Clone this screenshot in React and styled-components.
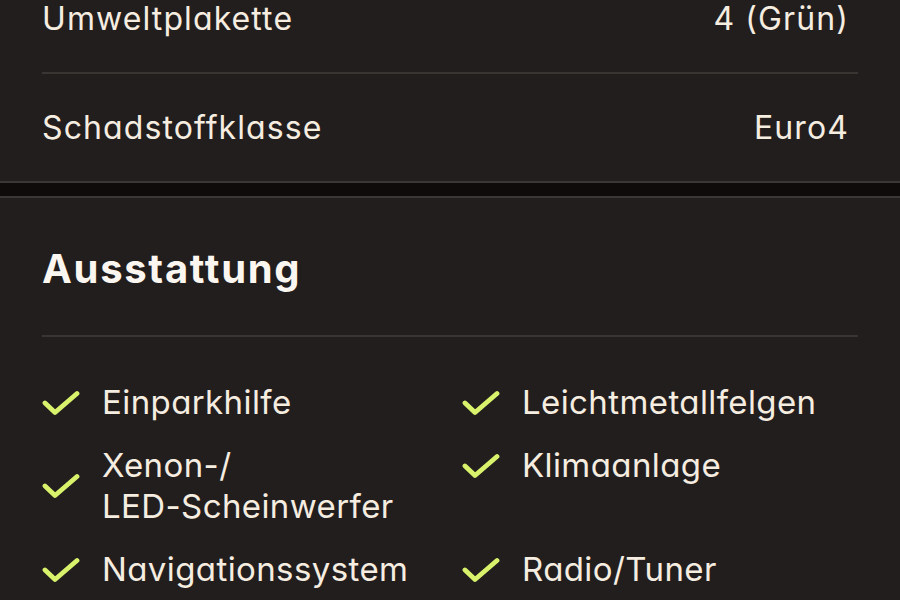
import React from "react";
import styled, { createGlobalStyle } from "styled-components";

const GlobalStyle = createGlobalStyle`
  html, body {
    margin: 0;
    padding: 0;
    background: #0e0b0a;
    overflow: hidden;
  }
  body {
    font-family: Inter, "Noto Sans", "Liberation Sans", sans-serif;
    color: #f6ede1;
  }
`;

const Page = styled.div`
  width: 900px;
  height: 600px;
  overflow: hidden;
  background: #0e0b0a;
`;

// page is scrolled a bit, the first row is cut at the top
const Scroller = styled.div`
  margin-top: -35px;
  display: flex;
  flex-direction: column;
  gap: 13px;
`;

const Card = styled.section`
  background: #221e1d;
  border-top: ${(p) => (p.$top ? "2px solid #3b3736" : "none")};
  border-bottom: 2px solid #3b3736;
  padding: 0 42px;
`;

const Row = styled.div`
  display: flex;
  align-items: center;
  justify-content: space-between;
  height: 107px;
  padding-right: 9px;
  font-size: 32px;
  letter-spacing: 1.1px;
  font-feature-settings: "cv11";
  border-bottom: ${(p) => (p.$last ? "none" : "2px solid #393533")};
`;

const Heading = styled.h2`
  margin: 0;
  padding: 47px 0 42px;
  font-size: 40px;
  line-height: 48px;
  font-weight: 700;
  letter-spacing: 1.7px;
  color: #fbf6ef;
  border-bottom: 2px solid #393533;
`;

const Grid = styled.div`
  display: grid;
  grid-template-columns: 420px 1fr;
  row-gap: 22px;
  padding-top: 45px;
  padding-bottom: 40px;
  align-items: start;
`;

const Item = styled.div`
  display: flex;
  align-items: center;
  gap: 22px;
  font-size: 33px;
  line-height: 41px;
  letter-spacing: 0.4px;
  font-feature-settings: "cv11";
`;

const Check = () => (
  <svg width="38" height="26" viewBox="0 0 38 26" fill="none" style={{ flex: "none" }}>
    <path
      d="M3 13 L13 22.5 L35 3.5"
      stroke="#d9f26c"
      strokeWidth="4.8"
      strokeLinecap="round"
      strokeLinejoin="round"
    />
  </svg>
);

const specs = [
  ["Umweltplakette", "4 (Grün)"],
  ["Schadstoffklasse", "Euro4"],
];

const features = [
  ["Einparkhilfe"],
  ["Leichtmetallfelgen"],
  ["Xenon-/", "LED-Scheinwerfer"],
  ["Klimaanlage"],
  ["Navigationssystem"],
  ["Radio/Tuner"],
];

export default function App() {
  return (
    <Page>
      <GlobalStyle />
      <Scroller>
        <Card>
          {specs.map(([label, value], i) => (
            <Row key={label} $last={i === specs.length - 1}>
              <span>{label}</span>
              <span>{value}</span>
            </Row>
          ))}
        </Card>
        <Card $top>
          <Heading>Ausstattung</Heading>
          <Grid>
            {features.map((lines) => (
              <Item key={lines.join("")}>
                <Check />
                <span>
                  {lines.map((l, j) => (
                    <React.Fragment key={l}>
                      {j > 0 && <br />}
                      {l}
                    </React.Fragment>
                  ))}
                </span>
              </Item>
            ))}
          </Grid>
        </Card>
      </Scroller>
    </Page>
  );
}
